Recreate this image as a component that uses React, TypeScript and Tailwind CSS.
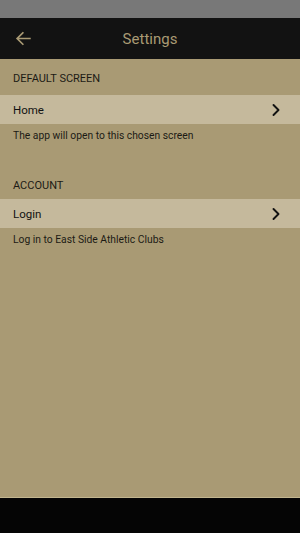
import { ChevronRight } from "lucide-react";

const font = { fontFamily: "Roboto, 'Noto Sans', sans-serif" };

function SectionLabel({ text, className }: { text: string; className: string }) {
  return (
    <div className={`flex items-center px-[13px] text-[11px] text-[#1c1a14] ${className}`}>
      {text}
    </div>
  );
}

function Row({ label }: { label: string }) {
  return (
    <div className="flex h-[29px] items-center justify-between bg-[#c5b99c] pl-[13px] pr-[14px] text-[11.5px] text-[#111]">
      <span className="pt-[2px]">{label}</span>
      <ChevronRight size={20} strokeWidth={2.3} className="text-[#111]" />
    </div>
  );
}

function Note({ text }: { text: string }) {
  return (
    <div className="flex h-[22px] items-center px-[13px] pt-[1px] text-[10.3px] text-[#1c1a14]">
      {text}
    </div>
  );
}

export default function App() {
  return (
    <div className="flex h-[533px] w-[300px] flex-col bg-[#a99a74]" style={font}>
      <div className="h-[18px] bg-[#787878]" />
      <div className="relative flex h-[41px] items-center justify-center bg-[#121212]">
        <svg
          className="absolute left-[15px] top-[12px]"
          width="17"
          height="17"
          viewBox="0 0 24 24"
          fill="none"
          stroke="#a99a74"
          strokeWidth="2.4"
          strokeLinecap="square"
        >
          <path d="M21 12H4M11 4l-8 8 8 8" />
        </svg>
        <span className="pt-[2px] text-[15px] text-[#a99a74]">Settings</span>
      </div>
      <div className="flex flex-1 flex-col border-b border-[#c2b58f]">
        <SectionLabel text="DEFAULT SCREEN" className="h-[36px] pt-[5px]" />
        <Row label="Home" />
        <Note text="The app will open to this chosen screen" />
        <SectionLabel text="ACCOUNT" className="mt-[26px] h-[27px] pt-[2px]" />
        <Row label="Login" />
        <Note text="Log in to East Side Athletic Clubs" />
      </div>
      <div className="h-[35px] bg-[#050505]" />
    </div>
  );
}
